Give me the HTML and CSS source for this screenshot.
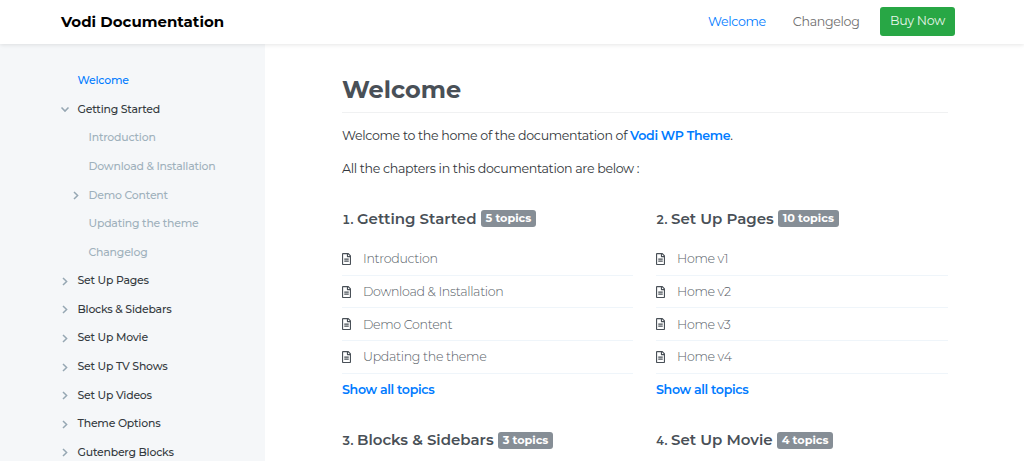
FILE: index.html
```html
<!DOCTYPE html>
<html lang="en">
<head>
    <meta charset="UTF-8">
    <meta name="viewport" content="width=device-width, initial-scale=1.0">
    <title>Vodi Documentation</title>
    <link rel="stylesheet" href="styles.css">
</head>
<body>
    <svg class="sprite" xmlns="http://www.w3.org/2000/svg">
        <symbol id="angle" viewBox="0 0 6 9">
            <path d="M1 1l3.6 3.5L1 8" fill="none" stroke="currentColor" stroke-width="1.5"/>
        </symbol>
        <symbol id="file" viewBox="0 0 384 512">
            <path fill="currentColor" d="M288 248v28c0 6.600-5.400 12-12 12H108c-6.600 0-12-5.400-12-12v-28c0-6.600 5.400-12 12-12h168c6.600 0 12 5.400 12 12zm-12 72H108c-6.600 0-12 5.400-12 12v28c0 6.600 5.400 12 12 12h168c6.600 0 12-5.400 12-12v-28c0-6.600-5.400-12-12-12zm108-188.100V464c0 26.500-21.500 48-48 48H48c-26.500 0-48-21.500-48-48V48C0 21.500 21.500 0 48 0h204.100C264.800 0 277 5.100 286 14.100L369.900 98c9 8.900 14.100 21.200 14.100 33.900zm-128-80V128h76.100L256 51.900zM336 464V176H232c-13.300 0-24-10.700-24-24V48H48v416h288z"/>
        </symbol>
    </svg>

    <header class="site-header">
        <a class="brand" href="#">Vodi Documentation</a>
        <nav class="main-nav">
            <a class="active" href="#">Welcome</a>
            <a class="changelog" href="#">Changelog</a>
            <a class="buy" href="#">Buy Now</a>
        </nav>
    </header>

    <div class="layout">
        <aside class="sidebar">
            <ul>
                <li class="active"><a href="#">Welcome</a></li>
                <li class="open"><svg><use href="#angle"/></svg><a href="#">Getting Started</a></li>
                <li class="sub"><a href="#">Introduction</a></li>
                <li class="sub"><a href="#">Download &amp; Installation</a></li>
                <li class="sub"><svg><use href="#angle"/></svg><a href="#">Demo Content</a></li>
                <li class="sub"><a href="#">Updating the theme</a></li>
                <li class="sub"><a href="#">Changelog</a></li>
                <li><svg><use href="#angle"/></svg><a href="#">Set Up Pages</a></li>
                <li><svg><use href="#angle"/></svg><a href="#">Blocks &amp; Sidebars</a></li>
                <li><svg><use href="#angle"/></svg><a href="#">Set Up Movie</a></li>
                <li><svg><use href="#angle"/></svg><a href="#">Set Up TV Shows</a></li>
                <li><svg><use href="#angle"/></svg><a href="#">Set Up Videos</a></li>
                <li><svg><use href="#angle"/></svg><a href="#">Theme Options</a></li>
                <li><svg><use href="#angle"/></svg><a href="#">Gutenberg Blocks</a></li>
            </ul>
        </aside>

        <main class="content">
            <h1>Welcome</h1>
            <p>Welcome to the home of the documentation of <a href="#">Vodi WP Theme</a>.</p>
            <p class="intro">All the chapters in this documentation are below :</p>

            <div class="chapters">
                <section>
                    <h2><small>1.</small><span>Getting Started</span><b>5 topics</b></h2>
                    <ul>
                        <li><svg><use href="#file"/></svg><a href="#">Introduction</a></li>
                        <li><svg><use href="#file"/></svg><a href="#">Download &amp; Installation</a></li>
                        <li><svg><use href="#file"/></svg><a href="#">Demo Content</a></li>
                        <li><svg><use href="#file"/></svg><a href="#">Updating the theme</a></li>
                    </ul>
                    <a class="more" href="#">Show all topics</a>
                </section>
                <section>
                    <h2><small>2.</small><span>Set Up Pages</span><b>10 topics</b></h2>
                    <ul>
                        <li><svg><use href="#file"/></svg><a href="#">Home v1</a></li>
                        <li><svg><use href="#file"/></svg><a href="#">Home v2</a></li>
                        <li><svg><use href="#file"/></svg><a href="#">Home v3</a></li>
                        <li><svg><use href="#file"/></svg><a href="#">Home v4</a></li>
                    </ul>
                    <a class="more" href="#">Show all topics</a>
                </section>
                <section>
                    <h2><small>3.</small><span>Blocks &amp; Sidebars</span><b>3 topics</b></h2>
                </section>
                <section>
                    <h2><small>4.</small><span>Set Up Movie</span><b>4 topics</b></h2>
                </section>
            </div>
        </main>
    </div>
</body>
</html>
```
FILE: styles.css
```css
* {
    box-sizing: border-box;
}

body {
    margin: 0;
    height: 461px;
    overflow: hidden;
    display: flex;
    flex-direction: column;
    font-family: Montserrat, Inter, sans-serif;
    font-size: 12.600px;
    letter-spacing: -0.32px;
    color: #33373b;
    background: #fff;
}

a {
    color: inherit;
    text-decoration: none;
}

ul {
    list-style: none;
    margin: 0;
    padding: 0;
}

.sprite {
    display: none;
}

.site-header {
    position: relative;
    flex: none;
    display: flex;
    align-items: center;
    justify-content: space-between;
    height: 44px;
    padding: 0 69px 1px 61px;
    background: #fff;
    box-shadow: 0 1px 4px rgba(0, 0, 0, 0.1);
}

.brand {
    font-size: 15px;
    font-weight: 700;
    letter-spacing: 0;
    color: #000;
}

.main-nav {
    display: flex;
    align-items: center;
    color: #6f6f6f;
}

.main-nav .active {
    color: #007bff;
    margin-right: 27px;
}

.main-nav .changelog {
    margin-right: 20.500px;
}

.main-nav .buy {
    width: 75px;
    height: 29px;
    line-height: 28px;
    text-align: center;
    color: #e6f5e9;
    background: #28a745;
    border-radius: 3px;
}

.layout {
    display: flex;
    flex: 1;
    min-height: 0;
}

.sidebar {
    width: 265px;
    flex: none;
    padding: 22px 0 0 61px;
    background: #f5f7f9;
    font-size: 10.900px;
    font-weight: 500;
    letter-spacing: -0.2px;
    color: #343a40;
}

.sidebar li {
    display: flex;
    align-items: center;
    height: 28.58px;
    padding-left: 16.500px;
}

.sidebar li.active {
    color: #007bff;
}

.sidebar li.sub {
    padding-left: 27.500px;
    color: #9fb1bc;
}

.sidebar svg {
    width: 6px;
    height: 9px;
    margin: 2px 10px 0 -16px;
    color: #96a7b3;
}

.sidebar .open svg {
    transform: rotate(90deg);
}

.content {
    width: 606px;
    margin-left: 77px;
}

h1 {
    margin: 0 0 13px;
    height: 69px;
    padding-top: 29px;
    border-bottom: 1px solid #f0f1f2;
    font-size: 24px;
    letter-spacing: 0;
    line-height: 34px;
    font-weight: 700;
    color: #495057;
}

p {
    margin: 0 0 13px;
    line-height: 20px;
}

p a {
    font-weight: 600;
    color: #007bff;
}

.chapters {
    display: grid;
    grid-template-columns: 291px 292px;
    column-gap: 23px;
    row-gap: 22px;
    margin-top: 27px;
}

h2 {
    display: flex;
    align-items: center;
    height: 24px;
    margin: 0 0 13px;
    font-size: 15px;
    letter-spacing: 0;
    font-weight: 600;
    color: #495057;
}

h2 small {
    width: 15px;
    font-size: 12px;
    font-variant-numeric: tabular-nums;
    padding-top: 2px;
}

h2 b {
    height: 17px;
    margin: 1px 0 0 4px;
    padding: 0 5px;
    border-radius: 3px;
    font-size: 11.250px;
    font-weight: 700;
    line-height: 17px;
    color: #fff;
    background: #868e96;
}

.chapters li {
    display: flex;
    align-items: center;
    height: 32.700px;
    border-bottom: 1px solid #eff5fa;
    font-weight: 300;
    color: #596168;
}

.chapters li svg {
    width: 9px;
    height: 12px;
    margin-right: 12px;
    color: #495057;
}

.more {
    display: block;
    height: 32px;
    line-height: 32px;
    font-weight: 600;
    color: #007bff;
}
```
